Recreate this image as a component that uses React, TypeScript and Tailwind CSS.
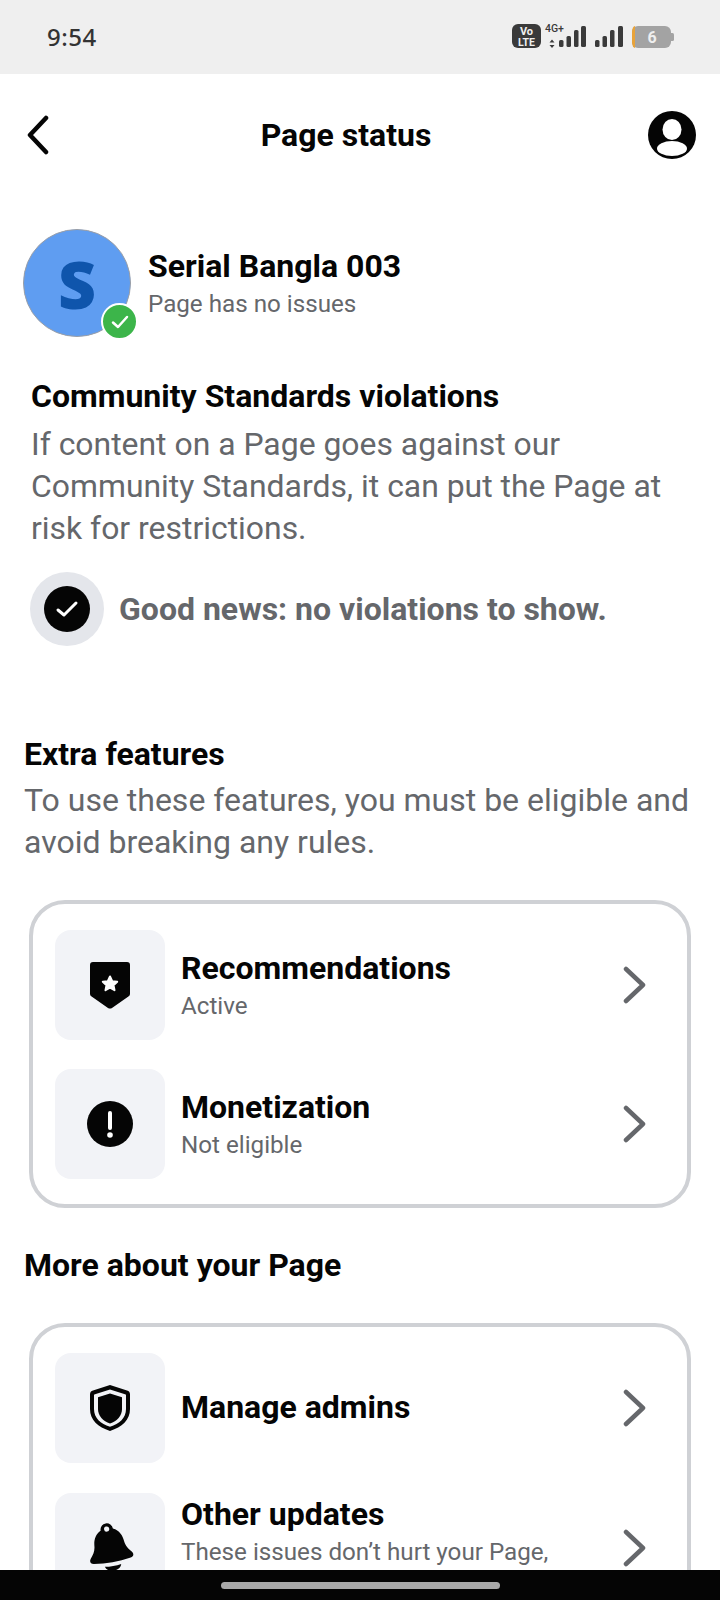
import React from "react";

const Chevron = () => (
  <svg width="24" height="38" viewBox="0 0 24 38" fill="none" className="shrink-0">
    <path d="M3 3 L20 19 L3 35" stroke="#65676b" strokeWidth="4.5" strokeLinecap="round" strokeLinejoin="round" />
  </svg>
);

const Tile = ({ children }: { children: React.ReactNode }) => (
  <div className="w-[110px] h-[110px] rounded-[16px] bg-[#f2f3f7] flex items-center justify-center shrink-0">{children}</div>
);

const Row = ({ icon, title, sub, textClass }: { icon: React.ReactNode; title: string; sub?: string; textClass?: string }) => (
  <div className="flex items-center h-[110px] pr-[40px]">
    <Tile>{icon}</Tile>
    <div className={"flex-1 ml-[16px] min-w-0 " + (textClass ?? "")}>
      <div className="text-[32px] leading-[38px] font-bold text-[#050505] whitespace-nowrap">{title}</div>
      {sub && <div className="text-[24.200px] leading-[32px] mt-[3px] text-[#65676b] whitespace-nowrap">{sub}</div>}
    </div>
    <Chevron />
  </div>
);

export default function App() {
  return (
    <div className="w-[720px] h-[1600px] overflow-hidden flex flex-col bg-white font-['Roboto',sans-serif]">
      <div className="h-[74px] shrink-0 bg-[#efefef] flex items-center justify-between pl-[47px] pr-[40px]">
        <span className="text-[24px] font-medium text-[#333] tracking-[0.5px] font-['Noto_Sans',sans-serif]">9:54</span>
        <svg width="170" height="32" viewBox="0 0 170 32" className="mb-[-2px]">
          <rect x="2" y="2" width="29" height="24" rx="6" fill="#3a3a3a" />
          <text x="16.5" y="13" fontSize="11" fontWeight="700" fill="#efefef" textAnchor="middle" fontFamily="Roboto">Vo</text>
          <text x="16.5" y="24" fontSize="10.5" fontWeight="700" fill="#efefef" textAnchor="middle" fontFamily="Roboto">LTE</text>
          <text x="35" y="10" fontSize="10.5" fontWeight="500" fill="#3a3a3a" fontFamily="Roboto">4G+</text>
          <path d="M42 17.500l2.500 3h-5zM42 26l2.500-3h-5z" fill="#3a3a3a" />
          <rect x="49" y="18" width="4.500" height="7" rx="1.500" fill="#3a3a3a" />
          <rect x="56.500" y="14" width="4.500" height="11" rx="1.500" fill="#3a3a3a" />
          <rect x="64" y="8" width="4.500" height="17" rx="1.500" fill="#3a3a3a" />
          <rect x="71" y="4" width="5" height="21" rx="1.500" fill="#3a3a3a" />
          <rect x="85" y="18" width="4.500" height="7" rx="1.500" fill="#3a3a3a" />
          <rect x="92.500" y="14" width="4.500" height="11" rx="1.500" fill="#3a3a3a" />
          <rect x="100" y="8" width="4.500" height="17" rx="1.500" fill="#3a3a3a" />
          <rect x="108" y="4" width="5" height="21" rx="1.500" fill="#3a3a3a" />
          <rect x="122" y="4" width="39" height="22" rx="6" fill="#a3a3a3" />
          <path d="M125 4 a3 6 0 0 0 -3 6 v10 a3 6 0 0 0 3 6z" fill="#e8a33a" />
          <path d="M161 11h1.500a1.500 1.500 0 0 1 1.500 1.500v5a1.500 1.500 0 0 1-1.500 1.500H161z" fill="#a3a3a3" />
          <text x="142" y="21" fontSize="16" fontWeight="700" fill="#efefef" textAnchor="middle" fontFamily="Roboto">6</text>
        </svg>
      </div>

      <div className="flex-1 min-h-0 overflow-hidden">
        <div className="flex items-center justify-between h-[122px] pl-[26px] pr-[24px]">
          <svg width="24" height="40" viewBox="0 0 24 40" fill="none">
            <path d="M20 3 L4 20 L20 37" stroke="#050505" strokeWidth="4.500" strokeLinecap="round" strokeLinejoin="round" />
          </svg>
          <div className="text-[32px] font-bold text-[#050505] mr-[6px]">Page status</div>
          <svg width="48" height="48" viewBox="0 0 48 48">
            <circle cx="24" cy="24" r="24" fill="#050505" />
            <ellipse cx="24" cy="18.500" rx="9.500" ry="10.500" fill="#fff" />
            <ellipse cx="24" cy="37.500" rx="15" ry="7.500" fill="#fff" />
          </svg>
        </div>

        <div className="flex items-center mt-[33px] pl-[23px]">
          <div className="relative w-[108px] h-[108px] rounded-full bg-[#5f9df1] border border-[#9a9ea6] flex items-center justify-center shrink-0">
            <span className="text-[66px] leading-none font-extrabold text-[#0f55ac] font-['Open_Sans',sans-serif]">S</span>
            <div className="absolute right-[-8px] bottom-[-4px] w-[37px] h-[37px] rounded-full bg-[#3cb54a] border-2 border-white flex items-center justify-center">
              <svg width="18" height="14" viewBox="0 0 18 14" fill="none">
                <path d="M2 7.500 L7 12 L16 2" stroke="#fff" strokeWidth="2.500" strokeLinecap="round" strokeLinejoin="round" />
              </svg>
            </div>
          </div>
          <div className="ml-[17px]">
            <div className="text-[32px] leading-[38px] font-bold text-[#050505]">Serial Bangla 003</div>
            <div className="text-[24.200px] leading-[32px] text-[#65676b] mt-[3px]">Page has no issues</div>
          </div>
        </div>

        <div className="pl-[31px] pr-[20px] mt-[40px]">
          <div className="text-[32px] leading-[38px] font-bold text-[#050505]">Community Standards violations</div>
          <div className="text-[31.900px] leading-[42px] text-[#65676b] mt-[8px] whitespace-nowrap">
            If content on a Page goes against our<br />Community Standards, it can put the Page at<br />risk for restrictions.
          </div>
          <div className="flex items-center mt-[23px] -ml-[1px]">
            <div className="w-[74px] h-[74px] rounded-full bg-[#e4e6eb] flex items-center justify-center shrink-0">
              <div className="w-[46px] h-[46px] rounded-full bg-[#050505] flex items-center justify-center">
                <svg width="24" height="18" viewBox="0 0 24 18" fill="none">
                  <path d="M3 10 L9 15 L21 3" stroke="#fff" strokeWidth="3" strokeLinecap="round" strokeLinejoin="round" />
                </svg>
              </div>
            </div>
            <div className="ml-[15px] text-[32px] font-bold text-[#65676b] whitespace-nowrap">Good news: no violations to show.</div>
          </div>
        </div>

        <div className="pl-[24px] pr-[20px] mt-[89px]">
          <div className="text-[32px] leading-[38px] font-bold text-[#050505]">Extra features</div>
          <div className="text-[32px] leading-[42px] text-[#65676b] mt-[6px] whitespace-nowrap">
            To use these features, you must be eligible and<br />avoid breaking any rules.
          </div>
        </div>

        <div className="mx-[29px] mt-[37px] border-[4px] border-[#cfd1d5] rounded-[36px] pl-[22px] pt-[26px] pb-[25px] flex flex-col gap-[29px]">
          <Row
            title="Recommendations"
            sub="Active"
            textClass="pt-[1px]"
            icon={
              <svg width="40" height="47" viewBox="0 0 40 47">
                <path d="M3 0H37a3 3 0 0 1 3 3V32a3 3 0 0 1-1.600 2.600L22 46a4 4 0 0 1-4 0L1.600 34.600A3 3 0 0 1 0 32V3a3 3 0 0 1 3-3z" fill="#050505" />
                <path d="M20 14.500l2.200 4.700 5 .6-3.700 3.400 1 5L20 25.700l-4.500 2.500 1-5-3.700-3.400 5-.6z" fill="#fff" stroke="#fff" strokeWidth="2" strokeLinejoin="round" />
              </svg>
            }
          />
          <Row
            title="Monetization"
            sub="Not eligible"
            textClass="pt-[1px]"
            icon={
              <svg width="46" height="46" viewBox="0 0 46 46">
                <circle cx="23" cy="23" r="23" fill="#050505" />
                <rect x="21" y="10" width="4" height="19" rx="2" fill="#fff" />
                <circle cx="23" cy="34" r="2.800" fill="#fff" />
              </svg>
            }
          />
        </div>

        <div className="pl-[24px] mt-[38px] text-[32px] leading-[38px] font-bold text-[#050505]">More about your Page</div>

        <div className="mx-[29px] mt-[39px] border-[4px] border-[#cfd1d5] rounded-[36px] pl-[22px] pt-[26px] pb-[24px] flex flex-col gap-[30px]">
          <Row
            title="Manage admins"
            textClass="pb-[2px]"
            icon={
              <svg width="40" height="46" viewBox="0 0 40 46">
                <path d="M20 0 L37 5.500a4 4 0 0 1 3 3.800V24c0 11-8 18-20 22C8 42 0 35 0 24V9.300a4 4 0 0 1 3-3.800z" fill="#050505" />
                <path d="M20 4.500 L35 9.300a1 1 0 0 1 1 1V24c0 9-6.500 15-16 17.800C10.500 39 4 33 4 24V10.300a1 1 0 0 1 1-1z" fill="#f2f3f7" />
                <path d="M20 8.500 L32 12.300V24c0 7-5 12-12 14.500C13 36 8 31 8 24V12.300z" fill="#050505" />
              </svg>
            }
          />
          <Row
            title="Other updates"
            sub="These issues don’t hurt your Page,"
            textClass="pb-[34px]"
            icon={
              <svg width="50" height="52" viewBox="0 0 48 50">
                <g transform="rotate(-10 24 25)">
                  <path d="M24 1a6 6 0 0 1 6 6c6 3 8 8 8.500 14 .5 5 3 8 5.500 11 2 2.500 1 5-2 5.500-12 2-24 2-36 0-3-.5-4-3-2-5.500 2.500-3 5-6 5.500-11C10 15 12 10 18 7a6 6 0 0 1 6-6z" fill="#050505" />
                  <circle cx="24" cy="6.500" r="2.500" fill="#f2f3f7" />
                  <path d="M16 42c5 .8 11 .8 16 0-1 3.500-4 5-8 5s-7-1.500-8-5z" fill="#050505" />
                </g>
              </svg>
            }
          />
        </div>
      </div>

      <div className="h-[30px] shrink-0 bg-[#050505] flex items-start justify-center pt-[12px] relative z-10">
        <div className="w-[279px] h-[7px] rounded-full bg-[#a8a8a8]"></div>
      </div>
    </div>
  );
}
